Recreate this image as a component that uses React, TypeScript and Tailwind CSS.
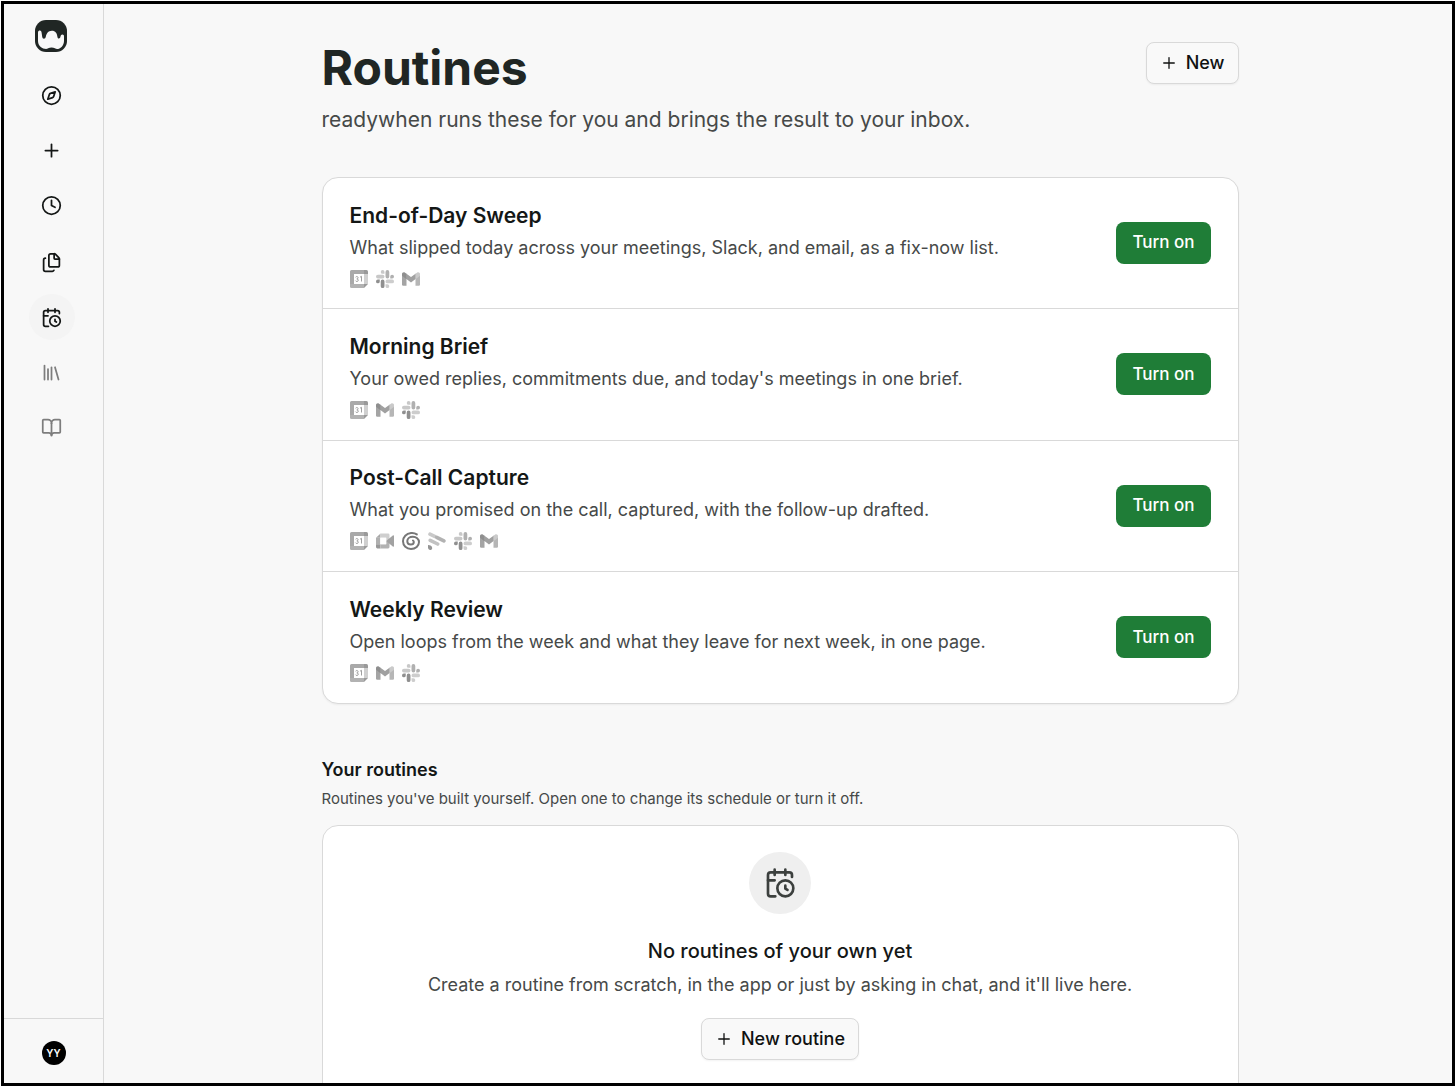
import React from "react";
import { BookOpen, Clock, Compass, Plus } from "lucide-react";

type IconProps = { className?: string };
type AppName = "calendar" | "slack" | "gmail" | "meet" | "granola" | "fireflies";

function Stroke({ className, children }: IconProps & { children: React.ReactNode }) {
  return (
    <svg
      className={className}
      viewBox="0 0 24 24"
      fill="none"
      stroke="currentColor"
      strokeWidth="2"
      strokeLinecap="round"
      strokeLinejoin="round"
      aria-hidden="true"
    >
      {children}
    </svg>
  );
}

function CalendarClockIcon({ className }: IconProps) {
  return (
    <Stroke className={className}>
      <path d="M21 7.5V6a2 2 0 0 0-2-2H5a2 2 0 0 0-2 2v14a2 2 0 0 0 2 2h3.5" />
      <path d="M16 2v4M8 2v4M3 10h5" />
      <circle cx="16" cy="16" r="6" />
      <path d="M16 14v2.2l1.6 1" />
    </Stroke>
  );
}

function FilesIcon({ className }: IconProps) {
  return (
    <Stroke className={className}>
      <path d="M15 2h-4a2 2 0 0 0-2 2v11a2 2 0 0 0 2 2h8a2 2 0 0 0 2-2V8" />
      <path d="M16.7 2.7A2.4 2.4 0 0 0 15 2v5a1 1 0 0 0 1 1h5a2.4 2.4 0 0 0-.7-1.7z" />
      <path d="M5 7a2 2 0 0 0-2 2v11a2 2 0 0 0 2 2h8a2 2 0 0 0 1.7-1" />
    </Stroke>
  );
}

function ShelfIcon({ className }: IconProps) {
  return (
    <Stroke className={className}>
      <path d="m16 6 4 14M12 6v14M8 8v12M4 4v16" />
    </Stroke>
  );
}

function BrandMark({ className }: IconProps) {
  return (
    <svg className={className} viewBox="0 0 32 32" aria-hidden="true">
      <rect width="32" height="32" rx="11" fill="#202624" />
      <path
        d="M3 12.500C3 11 4 10.600 4.800 10.600c1.300 0 1.700 1 1.900 2.600l.5 3.600c.2 1.200.8 1.900 1.700 1.900 1 0 1.600-.7 1.900-1.900.7-3.100 2.300-6 6-6s5.200 2.700 5.500 5.500c.2 1.500.7 2.300 1.500 2.300 1 0 1.500-.8 1.700-2 .2-1.300.9-2 1.900-2s1.600.7 1.600 1.900v4.300c0 4.100-2.300 7.100-5.800 8.100-1.500.3-2.400-.1-3.300-.7-1.700-1.100-5-1.100-6.700 0-.9.6-2 .9-3.500.6C5.600 28.200 3 24.900 3 20.800z"
        fill="#f8f8f8"
      />
    </svg>
  );
}

function AppIcon({ name }: { name: AppName }) {
  const c = "size-[18px]";
  switch (name) {
    case "calendar":
      return (
        <svg className={c} viewBox="0 0 18 18" role="img" aria-label="Google Calendar">
          <path d="M1.500 0H14v4H4v10H0V1.500A1.500 1.500 0 0 1 1.500 0z" fill="#a9a9a9" />
          <path d="M14 0h2.500A1.500 1.500 0 0 1 18 1.500V4h-4z" fill="#999" />
          <path d="M14 4h4v10h-4z" fill="#d0d0d0" />
          <path d="M0 14h14v4H1.500A1.500 1.500 0 0 1 0 16.500z" fill="#b2b2b2" />
          <path d="M14 14h4l-4 4z" fill="#9a9a9a" />
          <path d="M4 4h10v10H4z" fill="#fff" />
          <path d="M5.600 7.200c.5-1 2.500-.9 2.500.5 0 .8-.6 1.200-1.300 1.200.9 0 1.500.5 1.500 1.300 0 1.600-2.400 1.700-2.900.4M10 7.200l1.500-.9v5.200" stroke="#a0a0a0" strokeWidth="1" fill="none" />
        </svg>
      );
    case "slack":
      return (
        <svg className={c} viewBox="0 0 24 24" role="img" aria-label="Slack">
          <path fill="#8f8f8f" d="M5 15.200a2.500 2.500 0 1 1-2.500-2.500H5zm1.300 0a2.500 2.500 0 0 1 5 0v6.300a2.500 2.500 0 0 1-5 0z" />
          <path fill="#c8c8c8" d="M8.800 5a2.500 2.500 0 1 1 2.500-2.500V5zm0 1.300a2.500 2.500 0 0 1 0 5H2.500a2.500 2.500 0 0 1 0-5z" />
          <path fill="#b0b0b0" d="M19 8.800a2.500 2.500 0 1 1 2.500 2.500H19zm-1.300 0a2.500 2.500 0 0 1-5 0V2.500a2.500 2.500 0 0 1 5 0z" />
          <path fill="#cdcdcd" d="M15.200 19a2.500 2.500 0 1 1-2.500 2.500V19zm0-1.300a2.500 2.500 0 0 1 0-5h6.300a2.500 2.500 0 0 1 0 5z" />
        </svg>
      );
    case "gmail":
      return (
        <svg className={c} viewBox="0 0 24 24" role="img" aria-label="Gmail">
          <path fill="#a4a4a4" d="M0 6l6 4.500V21H1.600A1.600 1.600 0 0 1 0 19.400z" />
          <path fill="#b6b6b6" d="M18 10.500 24 6v13.400a1.600 1.600 0 0 1-1.600 1.600H18z" />
          <path fill="#a0a0a0" d="M5.500 4.600 12 9.400l6.500-4.800v7.200L12 16.800l-6.500-5z" />
          <path fill="#8e8e8e" d="M0 5.500C0 3 2.400 2.200 4.100 3.500L6 5v7.200L0 7.700z" />
          <path fill="#cacaca" d="M24 5.500c0-2.500-2.400-3.300-4.100-2L18 5v7.200l6-4.500z" />
        </svg>
      );
    case "meet":
      return (
        <svg className={c} viewBox="0 0 18 18" role="img" aria-label="Google Meet">
          <path fill="#a8a8a8" d="M4.500 1.500v4.300H0z" />
          <path fill="#b0b0b0" d="M0 5.800h4.300v6.500H0z" />
          <path fill="#989898" d="M0 12.300h4.300v4.200H1.400A1.400 1.400 0 0 1 0 15.100z" />
          <path fill="#cfcfcf" d="M4.500 1.500h7.600a1.400 1.400 0 0 1 1.400 1.400V9h-3.300V5.800H4.500z" />
          <path fill="#b2b2b2" d="M4.300 12.300h5.900V9h3.300v6.100a1.400 1.400 0 0 1-1.400 1.400H4.300z" />
          <path fill="#a2a2a2" d="m10.200 9 6.600-5.500c.5-.4 1.200-.1 1.200.6v9.800c0 .7-.7 1-1.200.6z" />
          <path fill="#fff" d="M4.300 5.800h5.900v6.500H4.300z" />
        </svg>
      );
    case "granola":
      return (
        <svg className={c} viewBox="0 0 18 18" role="img" aria-label="Granola">
          <path
            d="M14.800 2.400C13 1.200 11 .9 9 1.100 4.300 1.500 1 4.900 1 9.300 1 13.700 4.500 17 9 17c4.600 0 8-2.900 8-6.900 0-3.300-2.800-5.400-6.200-5.400-3.200 0-5.500 1.900-5.500 4.400 0 2.100 1.500 3.500 3.500 3.500 1.800 0 3-1.100 3-2.600 0-.7-.3-1.200-.8-1.500"
            fill="none"
            stroke="#777"
            strokeWidth="2"
            strokeLinecap="round"
          />
        </svg>
      );
    case "fireflies":
      return (
        <svg className={c} viewBox="0 0 18 18" role="img" aria-label="Fireflies">
          <g fill="none" strokeWidth="3.600" strokeLinecap="round">
            <path d="m2 2.200 4.600 2.200" stroke="#c9c9c9" />
            <path d="m8.700 5.300 7.200 3.600" stroke="#b2b2b2" />
            <path d="m2.200 8.300 7.500 3.700" stroke="#c2c2c2" />
          </g>
          <path d="M0 13c2.400 0 4.200 1 4.200 2.900 0 2.800-4.200 2.800-4.200-.3z" fill="#959595" />
        </svg>
      );
  }
}

const routines: { title: string; text: string; apps: AppName[] }[] = [
  {
    title: "End-of-Day Sweep",
    text: "What slipped today across your meetings, Slack, and email, as a fix-now list.",
    apps: ["calendar", "slack", "gmail"],
  },
  {
    title: "Morning Brief",
    text: "Your owed replies, commitments due, and today's meetings in one brief.",
    apps: ["calendar", "gmail", "slack"],
  },
  {
    title: "Post-Call Capture",
    text: "What you promised on the call, captured, with the follow-up drafted.",
    apps: ["calendar", "meet", "granola", "fireflies", "slack", "gmail"],
  },
  {
    title: "Weekly Review",
    text: "Open loops from the week and what they leave for next week, in one page.",
    apps: ["calendar", "gmail", "slack"],
  },
];

function NavLink({ label, active, muted, children }: { label: string; active?: boolean; muted?: boolean; children: React.ReactNode }) {
  return (
    <a
      href="#"
      aria-label={label}
      aria-current={active ? "page" : undefined}
      className={`flex size-[46px] items-center justify-center rounded-full ${active ? "bg-[#f4f4f4]" : ""} ${muted ? "text-[#7d7d7d]" : "text-[#141716]"}`}
    >
      {children}
    </a>
  );
}

function Sidebar() {
  return (
    <aside className="flex w-[100px] shrink-0 flex-col border-r border-[#d9d9d9]">
      <a href="#" aria-label="Home" className="mt-4 ml-[31px] self-start">
        <BrandMark className="size-8" />
      </a>
      <nav className="mt-5 flex flex-col items-center gap-[11px] pr-1">
        <div className="flex flex-col gap-[9px]">
          <NavLink label="Explore"><Compass className="size-[21px]" /></NavLink>
          <NavLink label="New chat"><Plus className="size-[21px]" /></NavLink>
          <NavLink label="History"><Clock className="size-[21px]" /></NavLink>
        </div>
        <div className="flex flex-col gap-[9px]">
          <NavLink label="Files"><FilesIcon className="size-[21px]" /></NavLink>
          <NavLink label="Routines" active><CalendarClockIcon className="size-[21px]" /></NavLink>
          <NavLink label="Library" muted><ShelfIcon className="size-[21px]" /></NavLink>
          <NavLink label="Docs" muted><BookOpen className="size-[21px]" /></NavLink>
        </div>
      </nav>
      <div className="mt-auto flex h-[65px] items-center justify-center border-t border-[#d9d9d9] pt-1">
        <button type="button" aria-label="Account" className="flex size-6 items-center justify-center rounded-full bg-black text-[10px] font-semibold text-white">
          YY
        </button>
      </div>
    </aside>
  );
}

function OutlineButton({ children }: { children: React.ReactNode }) {
  return (
    <button
      type="button"
      className="flex h-[42px] shrink-0 items-center gap-2 rounded-lg border border-[#d9d9d9] bg-[#f9f9f9] px-[13px] text-lg font-medium text-[#101211] shadow-xs"
    >
      <Plus className="size-[18px]" strokeWidth={1.75} />
      {children}
    </button>
  );
}

export default function App() {
  return (
    <div className="h-screen bg-white p-px font-['Inter',sans-serif]">
      <div className="flex h-full overflow-hidden border-[3px] border-black bg-[#f8f8f8]">
        <Sidebar />
        <main className="min-w-0 flex-1 overflow-hidden pr-6 pl-7">
          <div className="mx-auto max-w-[917px] pt-[38px]">
            <header className="flex items-start justify-between">
              <div>
                <h1 className="text-5xl leading-[51px] font-bold text-[#202624]">Routines</h1>
                <p className="mt-[13px] text-[21px] leading-7 text-[#464948]">
                  readywhen runs these for you and brings the result to your inbox.
                </p>
              </div>
              <OutlineButton>New</OutlineButton>
            </header>

            <ul className="mt-[43px] grid min-h-[527px] auto-rows-fr divide-y divide-[#d9d9d9] overflow-hidden rounded-2xl border border-[#d9d9d9] bg-white shadow-xs">
              {routines.map((routine) => (
                <li key={routine.title} className="flex items-center justify-between gap-6 px-[27px]">
                  <div className="pt-1">
                    <h2 className="text-[21px] leading-7 font-semibold text-[#141716]">{routine.title}</h2>
                    <p className="mt-[5px] text-lg leading-[26px] text-[#464948]">{routine.text}</p>
                    <div className="mt-2 flex h-5 items-center gap-2">
                      {routine.apps.map((app) => (
                        <AppIcon key={app} name={app} />
                      ))}
                    </div>
                  </div>
                  <button type="button" className="h-[42px] shrink-0 rounded-lg bg-[#1f7d37] px-4 text-[17px] font-medium text-white">
                    Turn on
                  </button>
                </li>
              ))}
            </ul>

            <section>
              <h2 className="mt-[52px] text-lg leading-7 font-semibold text-[#141716]">Your routines</h2>
              <p className="mt-[3px] text-[15px] leading-6 text-[#464948]">
                Routines you've built yourself. Open one to change its schedule or turn it off.
              </p>
              <div className="mt-[14px] flex flex-col items-center rounded-2xl border border-[#d9d9d9] bg-white px-6 pt-[26px] pb-12 text-center">
                <div className="flex size-[62px] items-center justify-center rounded-full bg-[#efefef] text-[#3c403e]">
                  <CalendarClockIcon className="size-8" />
                </div>
                <h3 className="mt-[23px] text-xl leading-7 font-medium text-[#141716]">No routines of your own yet</h3>
                <p className="mt-[7px] mb-5 text-lg leading-[26px] text-[#464948]">
                  Create a routine from scratch, in the app or just by asking in chat, and it'll live here.
                </p>
                <OutlineButton>New routine</OutlineButton>
              </div>
            </section>
          </div>
        </main>
      </div>
    </div>
  );
}
